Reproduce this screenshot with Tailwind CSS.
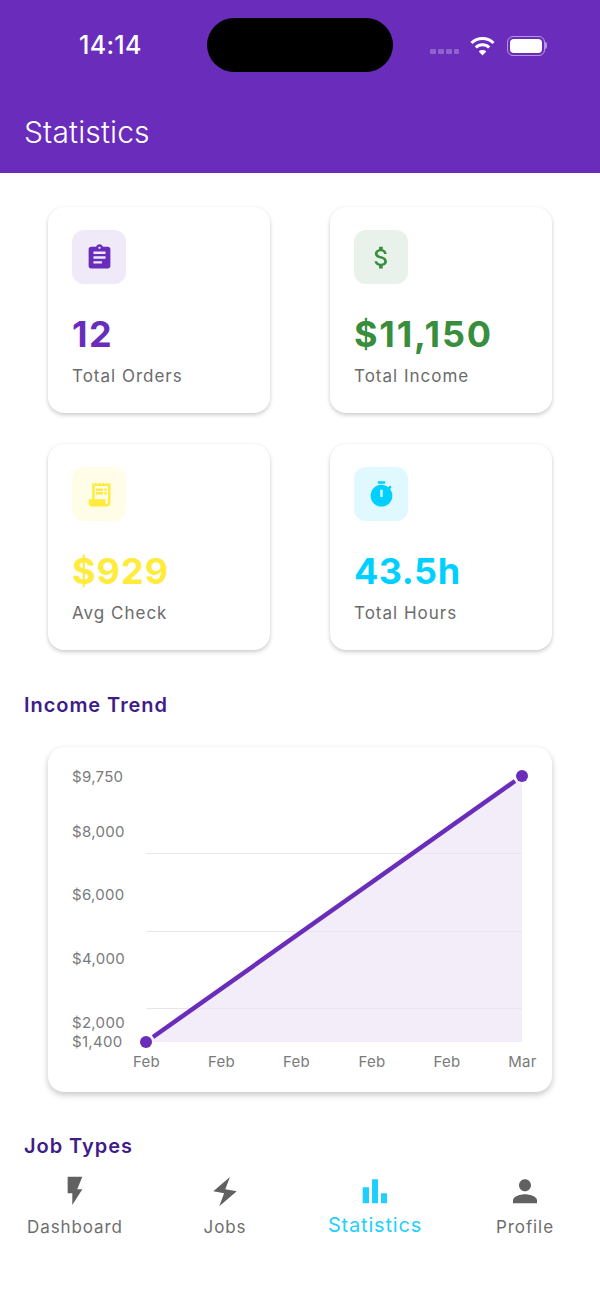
<!DOCTYPE html>
<html lang="en">
<head>
  <meta charset="UTF-8" />
  <meta name="viewport" content="width=device-width, initial-scale=1.0" />
  <title>Statistics</title>
  <script src="https://cdn.jsdelivr.net/npm/@tailwindcss/browser@4"></script>
</head>
<body class="bg-white font-['Inter',sans-serif]">
  <div class="w-[600px] h-[1299px] flex flex-col overflow-hidden">

    <!-- Header -->
    <header class="h-[173px] shrink-0 bg-[#6a2dbb] text-white relative">
      <div class="h-[90px] flex items-center">
        <span class="ml-[79px] mt-[2px] w-[128px] text-[25px] font-medium tracking-[0.3px]">14:14</span>
        <div class="w-[186px] h-[54px] bg-black rounded-full"></div>
        <div class="flex items-center ml-[37px] mt-[1px]">
          <div class="flex gap-[2px] mt-[11px] opacity-25">
            <span class="w-[6px] h-[5px] rounded-[1px] bg-white"></span>
            <span class="w-[6px] h-[5px] rounded-[1px] bg-white"></span>
            <span class="w-[6px] h-[5px] rounded-[1px] bg-white"></span>
            <span class="w-[5px] h-[5px] rounded-[1px] bg-white"></span>
          </div>
          <svg class="ml-[11px]" width="25" height="20" viewBox="0 0 25 20" fill="none" stroke="white" stroke-width="3">
            <path d="M1.5 7 C7.5 1 17.5 1 23.5 7" />
            <path d="M5.8 11.5 C9.5 7.8 15.5 7.8 19.2 11.5" />
            <path d="M12.5 19.5 L8.8 15.4 C10.8 13.6 14.2 13.6 16.2 15.4 Z" fill="white" stroke="none" />
          </svg>
          <div class="ml-[12px] w-[38px] h-[20px] rounded-[6px] border border-white/50 p-[2px]">
            <div class="w-full h-full bg-white rounded-[4px]"></div>
          </div>
          <span class="w-[2px] h-[7px] bg-white/50 rounded-r-full"></span>
        </div>
      </div>
      <h1 class="ml-6 mt-[21px] text-[30px] leading-[42px] font-light tracking-[0.15px]">Statistics</h1>
    </header>

    <!-- Content -->
    <main class="flex-1 overflow-hidden">
      <div class="grid grid-cols-2 gap-x-[60px] gap-y-[31px] px-12 pt-[34px]">
        <div class="h-[206px] rounded-2xl bg-white shadow-[0_2px_4px_rgba(0,0,0,0.2),0_0_2px_rgba(0,0,0,0.04)] px-6 pt-[23px]">
          <div class="w-[54px] h-[54px] rounded-xl bg-[#efe9f8] flex items-center justify-center">
            <svg width="29" height="29" viewBox="0 0 24 24" fill="#6a2dbb"><path d="M19 3h-4.18C14.4 1.84 13.3 1 12 1s-2.4.84-2.82 2H5c-1.1 0-2 .9-2 2v14c0 1.1.9 2 2 2h14c1.1 0 2-.9 2-2V5c0-1.1-.9-2-2-2zm-7 0c.55 0 1 .45 1 1s-.45 1-1 1-1-.45-1-1 .45-1 1-1zm2 14H7v-2h7v2zm3-4H7v-2h10v2zm0-4H7V7h10v2z"/></svg>
          </div>
          <p class="mt-[26px] text-[36px] leading-[48px] font-bold tracking-[1.5px] text-[#6a2dbb]">12</p>
          <p class="mt-[6px] text-[17px] leading-[24px] tracking-[1px] text-[#6b6b6b]">Total Orders</p>
        </div>
        <div class="h-[206px] rounded-2xl bg-white shadow-[0_2px_4px_rgba(0,0,0,0.2),0_0_2px_rgba(0,0,0,0.04)] px-6 pt-[23px]">
          <div class="w-[54px] h-[54px] rounded-xl bg-[#e9f2ea] flex items-center justify-center">
            <svg width="29" height="29" viewBox="0 0 24 24" fill="#388e3c"><path d="M11.8 10.9c-2.27-.59-3-1.2-3-2.15 0-1.09 1.01-1.85 2.7-1.85 1.78 0 2.44.85 2.5 2.1h2.21c-.07-1.72-1.12-3.3-3.21-3.81V3h-3v2.16c-1.94.42-3.5 1.68-3.5 3.61 0 2.31 1.91 3.46 4.7 4.13 2.5.6 3 1.48 3 2.41 0 .69-.49 1.79-2.7 1.79-2.06 0-2.87-.92-2.98-2.1h-2.2c.12 2.19 1.76 3.42 3.68 3.83V21h3v-2.15c1.95-.37 3.5-1.5 3.5-3.55 0-2.84-2.43-3.81-4.7-4.4z"/></svg>
          </div>
          <p class="mt-[26px] text-[36px] leading-[48px] font-bold tracking-[1.8px] text-[#388e3c]">$11,150</p>
          <p class="mt-[6px] text-[17px] leading-[24px] tracking-[1px] text-[#6b6b6b]">Total Income</p>
        </div>
        <div class="h-[206px] rounded-2xl bg-white shadow-[0_2px_4px_rgba(0,0,0,0.2),0_0_2px_rgba(0,0,0,0.04)] px-6 pt-[23px]">
          <div class="w-[54px] h-[54px] rounded-xl bg-[#fffde7] flex items-center justify-center">
            <svg width="29" height="29" viewBox="0 0 24 24" fill="#ffeb3b"><path d="M19.5 3.5 18 2l-1.5 1.5L15 2l-1.5 1.5L12 2l-1.5 1.5L9 2 7.5 3.5 6 2v14H3v3c0 1.66 1.34 3 3 3h12c1.66 0 3-1.34 3-3V2l-1.5 1.5zM19 19c0 .55-.45 1-1 1s-1-.45-1-1v-3H8V5h11v14z"/><path d="M9 7h6v2H9zM16 7h2v2h-2zM9 10h6v2H9zM16 10h2v2h-2z"/></svg>
          </div>
          <p class="mt-[26px] text-[36px] leading-[48px] font-bold tracking-[1px] text-[#ffeb3b]">$929</p>
          <p class="mt-[6px] text-[17px] leading-[24px] tracking-[1px] text-[#6b6b6b]">Avg Check</p>
        </div>
        <div class="h-[206px] rounded-2xl bg-white shadow-[0_2px_4px_rgba(0,0,0,0.2),0_0_2px_rgba(0,0,0,0.04)] px-6 pt-[23px]">
          <div class="w-[54px] h-[54px] rounded-xl bg-[#e0f8ff] flex items-center justify-center">
            <svg width="29" height="29" viewBox="0 0 24 24" fill="#00d0ff"><path d="M15 1H9v2h6V1zm-2 13h-2V8h2v6zm6.03-6.61 1.42-1.42c-.43-.51-.9-.99-1.41-1.41l-1.42 1.42C16.07 4.74 14.12 4 12 4c-4.97 0-9 4.03-9 9s4.02 9 9 9 9-4.03 9-9c0-2.12-.74-4.07-1.97-5.61z"/></svg>
          </div>
          <p class="mt-[26px] text-[36px] leading-[48px] font-bold tracking-[0.5px] text-[#00d0ff]">43.5h</p>
          <p class="mt-[6px] text-[17px] leading-[24px] tracking-[1px] text-[#6b6b6b]">Total Hours</p>
        </div>
      </div>

      <h2 class="ml-6 mt-[41px] text-[20px] leading-[28px] font-semibold tracking-[0.95px] text-[#3f1d87]">Income Trend</h2>

      <!-- Chart -->
      <div class="mx-12 mt-[28px] h-[345px] rounded-2xl bg-white shadow-[0_3px_6px_rgba(0,0,0,0.22),0_0_2px_rgba(0,0,0,0.04)]">
        <svg width="504" height="345" viewBox="48 747 504 345" class="block" font-size="15" fill="#7a7a7a" letter-spacing="0.3">
          <path d="M146 1042 L522 776 V1042 Z" fill="#f2edf9" />
          <g stroke="#e9e5ed" stroke-width="1">
            <path d="M146 853.5 H522" />
            <path d="M146 931.5 H522" />
            <path d="M146 1008.5 H522" />
          </g>
          <path d="M153 1037 L515 781" stroke="#6a2dbb" stroke-width="4.5" fill="none" />
          <circle cx="146" cy="1042" r="6" fill="#6a2dbb" />
          <circle cx="522" cy="776" r="6" fill="#6a2dbb" />
          <text x="72" y="781.5">$9,750</text>
          <text x="72" y="837">$8,000</text>
          <text x="72" y="900">$6,000</text>
          <text x="72" y="964">$4,000</text>
          <text x="72" y="1028">$2,000</text>
          <text x="72" y="1047">$1,400</text>
          <text x="146.5" y="1067" text-anchor="middle">Feb</text>
          <text x="221.5" y="1067" text-anchor="middle">Feb</text>
          <text x="296.5" y="1067" text-anchor="middle">Feb</text>
          <text x="372" y="1067" text-anchor="middle">Feb</text>
          <text x="447" y="1067" text-anchor="middle">Feb</text>
          <text x="522.5" y="1067" text-anchor="middle">Mar</text>
        </svg>
      </div>

      <h2 class="ml-6 mt-[40px] text-[20px] leading-[28px] font-semibold tracking-[0.95px] text-[#3f1d87]">Job Types</h2>
    </main>

    <!-- Bottom nav -->
    <nav class="h-[134px] shrink-0 bg-white grid grid-cols-4 text-[#6e6e6e] text-[17px] tracking-[0.9px]">
      <div class="flex flex-col items-center">
        <svg class="mt-[9px]" width="36" height="36" viewBox="0 0 24 24" fill="#616161"><path d="M7.1 1.8H16.9L13.5 10.2H16.9L10.2 20.7V12.9H7.1Z"/></svg>
        <span class="mt-[4px] leading-[26px]">Dashboard</span>
      </div>
      <div class="flex flex-col items-center">
        <svg class="mt-[9px]" width="36" height="36" viewBox="0 0 24 24" fill="#616161"><path d="M15.3 2 4.2 11.5l7.2 1.4L8.2 21.5 19.8 11.5l-7.6-1.3z"/></svg>
        <span class="mt-[4px] leading-[26px]">Jobs</span>
      </div>
      <div class="flex flex-col items-center text-[#1fcfff] text-[20px] tracking-[0.8px]">
        <svg class="mt-[9px]" width="36" height="36" viewBox="0 0 24 24" fill="#1fcfff"><path d="M3.8 8.9H8V19.5H3.8ZM10 3.5H14V19.5H10ZM16 12.9H20V19.5H16Z"/></svg>
        <span class="mt-[2px] leading-[26px]">Statistics</span>
      </div>
      <div class="flex flex-col items-center">
        <svg class="mt-[9px]" width="36" height="36" viewBox="0 0 24 24" fill="#616161"><path transform="translate(0 -0.5)" d="M12 12c2.21 0 4-1.79 4-4s-1.79-4-4-4-4 1.79-4 4 1.79 4 4 4zm0 2c-2.67 0-8 1.34-8 4v2h16v-2c0-2.66-5.33-4-8-4z"/></svg>
        <span class="mt-[4px] leading-[26px]">Profile</span>
      </div>
    </nav>
  </div>
</body>
</html>
